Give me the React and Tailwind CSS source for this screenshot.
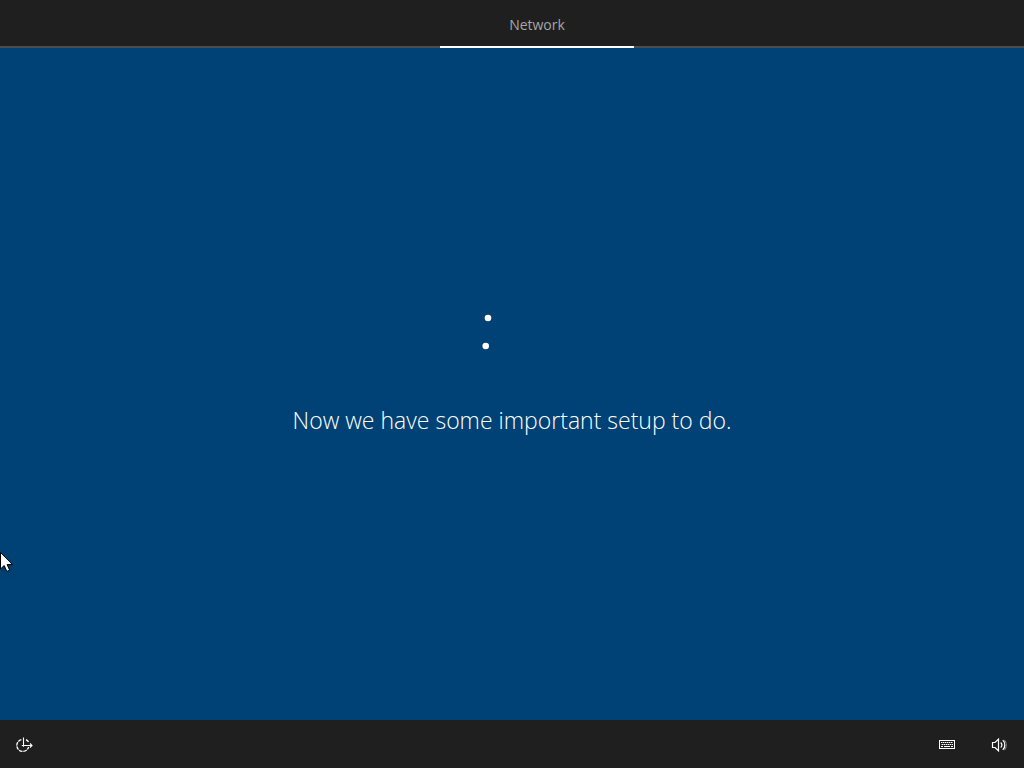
import React from 'react'

const tabs = ['Network']

function LoadingRing() {
  return (
    <svg width="64" height="64" viewBox="0 0 64 64" fill="white" role="img" aria-label="Loading">
      <circle cx="8" cy="18" r="3.3" />
      <circle cx="5.7" cy="46" r="3.3" />
    </svg>
  )
}

function EaseOfAccessIcon() {
  return (
    <svg width="17" height="16" viewBox="0 0 17 16" fill="none" stroke="white" strokeWidth="1.3">
      <path d="M5.4 2.6A6 6 0 1 0 12.6 10" strokeDasharray="3.6 0.8" />
      <path d="M10 2.6A6 6 0 0 1 12.5 5" />
      <path d="M7.5 0.5v8H16M5.8 8.5h2M7.5 8v1.8M14 6.5l2 2-2 2" strokeWidth="1.1" />
    </svg>
  )
}

function KeyboardIcon() {
  return (
    <svg width="16" height="16" viewBox="0 0 16 16" fill="none" stroke="white">
      <rect x="0.5" y="3.5" width="15" height="8" />
      <path d="M2 5.5h12M3 7.5h11" strokeDasharray="1 1" />
      <path d="M2 5.5h12M2 7.5h12" strokeOpacity="0.45" />
      <path d="M2 9.5h2M5 9.5h6M12 9.5h2" />
    </svg>
  )
}

function VolumeIcon() {
  return (
    <svg width="16" height="16" viewBox="0 0 16 16" fill="none" stroke="white" strokeWidth="1.2">
      <path d="M1.5 5.5h2.5l3.5-3.3v11.6l-3.5-3.3h-2.5z" />
      <path d="M9.7 5.5a3.6 3.6 0 0 1 0 5" />
      <path d="M11.8 3.2a6.8 6.8 0 0 1 0 9.6" />
      <path d="M13.5 3.2a7.5 7.5 0 0 1 0 9.6" strokeOpacity="0.45" />
    </svg>
  )
}

function Cursor() {
  return (
    <svg
      className="absolute left-0 top-[552px] drop-shadow-md"
      width="14"
      height="20"
      viewBox="0 0 14 20"
      fill="white"
      stroke="black"
      aria-hidden="true"
    >
      <path d="M0.5 0.5v16.5l3.7-3.5 2.6 5.9 2.9-1.2-2.6-5.6h5.4z" />
    </svg>
  )
}

export default function App() {
  return (
    <div className="relative min-h-screen flex flex-col bg-[#004275] text-white font-['Open_Sans','Noto_Sans',sans-serif]">
      <header className="h-12 shrink-0 flex bg-[#1f1f1f] shadow-[inset_0_-2px_0_#4c4c4c]">
        <nav className="flex flex-1 justify-center pl-[50px]">
          {tabs.map((tab) => (
            <button
              key={tab}
              type="button"
              className="w-[194px] h-12 pt-0.5 border-b-2 border-white text-[14px] text-[#a6a6a6]"
            >
              {tab}
            </button>
          ))}
        </nav>
      </header>

      <main className="flex-1 flex flex-col items-center justify-center gap-10 pb-8">
        <LoadingRing />
        <h1 className="text-[23px] leading-8 font-light">Now we have some important setup to do.</h1>
      </main>

      <footer className="h-12 shrink-0 flex items-center justify-between pl-4 pr-[17px] pt-0.5 bg-[#1f1f1f]">
        <button type="button" aria-label="Ease of access">
          <EaseOfAccessIcon />
        </button>
        <div className="flex items-center gap-9">
          <button type="button" aria-label="Keyboard">
            <KeyboardIcon />
          </button>
          <button type="button" aria-label="Volume">
            <VolumeIcon />
          </button>
        </div>
      </footer>

      <Cursor />
    </div>
  )
}
